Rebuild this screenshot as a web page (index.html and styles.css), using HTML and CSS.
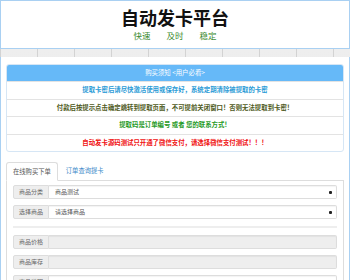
FILE: index.html
```html
<!DOCTYPE html>
<html lang="zh-CN">
<head>
  <meta charset="UTF-8" />
  <meta name="viewport" content="width=device-width, initial-scale=1.0"/>
  <title>自动发卡平台</title>
  <link rel="stylesheet" href="styles.css">
</head>
<body>

  <!-- Header -->
  <header class="header">
    <h1>自动发卡平台</h1>
    <p class="slogan"><span>快速</span><span>及时</span><span>稳定</span></p>
  </header>

  <div class="strip"></div>

  <main class="main">

    <!-- Notice -->
    <section class="notice">
      <div class="notice-head">购买须知 &lt;用户必看&gt;</div>
      <div class="notice-row blue">提取卡密后请尽快激活使用或保存好，系统定期清除被提取的卡密</div>
      <div class="notice-row olive">付款后按提示点击确定跳转到提取页面，不可提前关闭窗口！否则无法提取到卡密！</div>
      <div class="notice-row green">提取码是订单编号 或者 您的联系方式！</div>
      <div class="notice-row red">自动发卡源码测试只开通了微信支付，请选择微信支付测试！！！</div>
    </section>

    <!-- Tabs -->
    <ul class="tabs">
      <li class="tab active">在线购买下单</li>
      <li class="tab">订单查询提卡</li>
    </ul>

    <div class="tab-box">
      <div class="input-group">
        <span class="addon">商品分类</span>
        <div class="field select">商品测试<span class="caret"></span></div>
      </div>
      <div class="input-group">
        <span class="addon">选择商品</span>
        <div class="field select">请选择商品<span class="caret"></span></div>
      </div>

      <hr class="divider">

      <div class="input-group">
        <span class="addon">商品价格</span>
        <div class="field readonly"></div>
      </div>
      <div class="input-group">
        <span class="addon">商品库存</span>
        <div class="field readonly"></div>
      </div>
      <div class="input-group">
        <span class="addon">商品说明</span>
        <div class="field"></div>
      </div>
    </div>

  </main>

</body>
</html>
```

FILE: styles.css
```css
* {
  margin: 0;
  padding: 0;
  box-sizing: border-box;
  font-family: 'Noto Sans CJK SC', 'Liberation Sans', sans-serif;
}

body {
  background-color: #e6e6e6;
  background-image:
    repeating-linear-gradient(90deg, rgba(160, 160, 160, 0.35) 0 1px, transparent 1px 37px),
    linear-gradient(#f1f1f1, #dedede);
  color: #333;
}

.header {
  height: 49px;
  background-color: #fff;
  border: 1px solid #a9d0f2;
  text-align: center;
  padding-top: 5px;
}

.header h1 {
  font-size: 18px;
  line-height: 22px;
  font-weight: bold;
  color: #111;
}

.slogan {
  font-size: 8.5px;
  line-height: 14px;
  color: #3b8a2e;
}

.slogan span {
  margin: 0 8px;
}

.strip {
  height: 8px;
}

.main {
  background-color: #fff;
  border-left: 1px solid #a9d0f2;
  border-right: 1px solid #a9d0f2;
  padding: 7px 5px 20px;
}

.notice {
  border: 1px solid #d6e6f5;
  border-radius: 3px;
  overflow: hidden;
  text-align: center;
  font-size: 6.4px;
  font-weight: bold;
}

.notice-head {
  background-color: #66b9f8;
  color: #fff;
  font-weight: normal;
  line-height: 16px;
}

.notice-row {
  line-height: 16.5px;
  border-top: 1px solid #e3e3e3;
}

.blue { color: #2b9bd6; }
.olive { color: #4e5a22; }
.green { color: #1f9a1f; }
.red { color: #f01010; }

.tabs {
  list-style: none;
  display: flex;
  margin-top: 10px;
  border-bottom: 1px solid #ddd;
}

.tab {
  font-size: 6.3px;
  line-height: 17px;
  padding: 0 6px;
  color: #3a87c8;
  margin-bottom: -1px;
  margin-right: 2px;
}

.tab.active {
  color: #555;
  background-color: #fff;
  border: 1px solid #ddd;
  border-bottom-color: #fff;
  border-radius: 3px 3px 0 0;
}

.tab-box {
  border: 1px solid #ddd;
  border-top: none;
  padding: 4px 6px 10px;
  display: flex;
  flex-direction: column;
  gap: 6px;
}

.input-group {
  display: flex;
  height: 14px;
  font-size: 6px;
  line-height: 12px;
}

.addon {
  width: 36px;
  flex-shrink: 0;
  text-align: center;
  color: #666;
  background-color: #eee;
  border: 1px solid #ddd;
  border-radius: 2px 0 0 2px;
}

.field {
  flex: 1;
  position: relative;
  border: 1px solid #ddd;
  border-left: none;
  border-radius: 0 2px 2px 0;
  padding-left: 6px;
  color: #555;
  background-color: #fff;
  box-shadow: inset 0 1px 1px rgba(0, 0, 0, 0.05);
}

.field.readonly {
  background-color: #eee;
}

.caret {
  position: absolute;
  right: 4px;
  top: 5px;
  width: 3px;
  height: 3px;
  border-radius: 1px;
  background-color: #222;
}

.divider {
  border: none;
  border-top: 2px solid #eee;
  margin: 1px 0;
}
```
